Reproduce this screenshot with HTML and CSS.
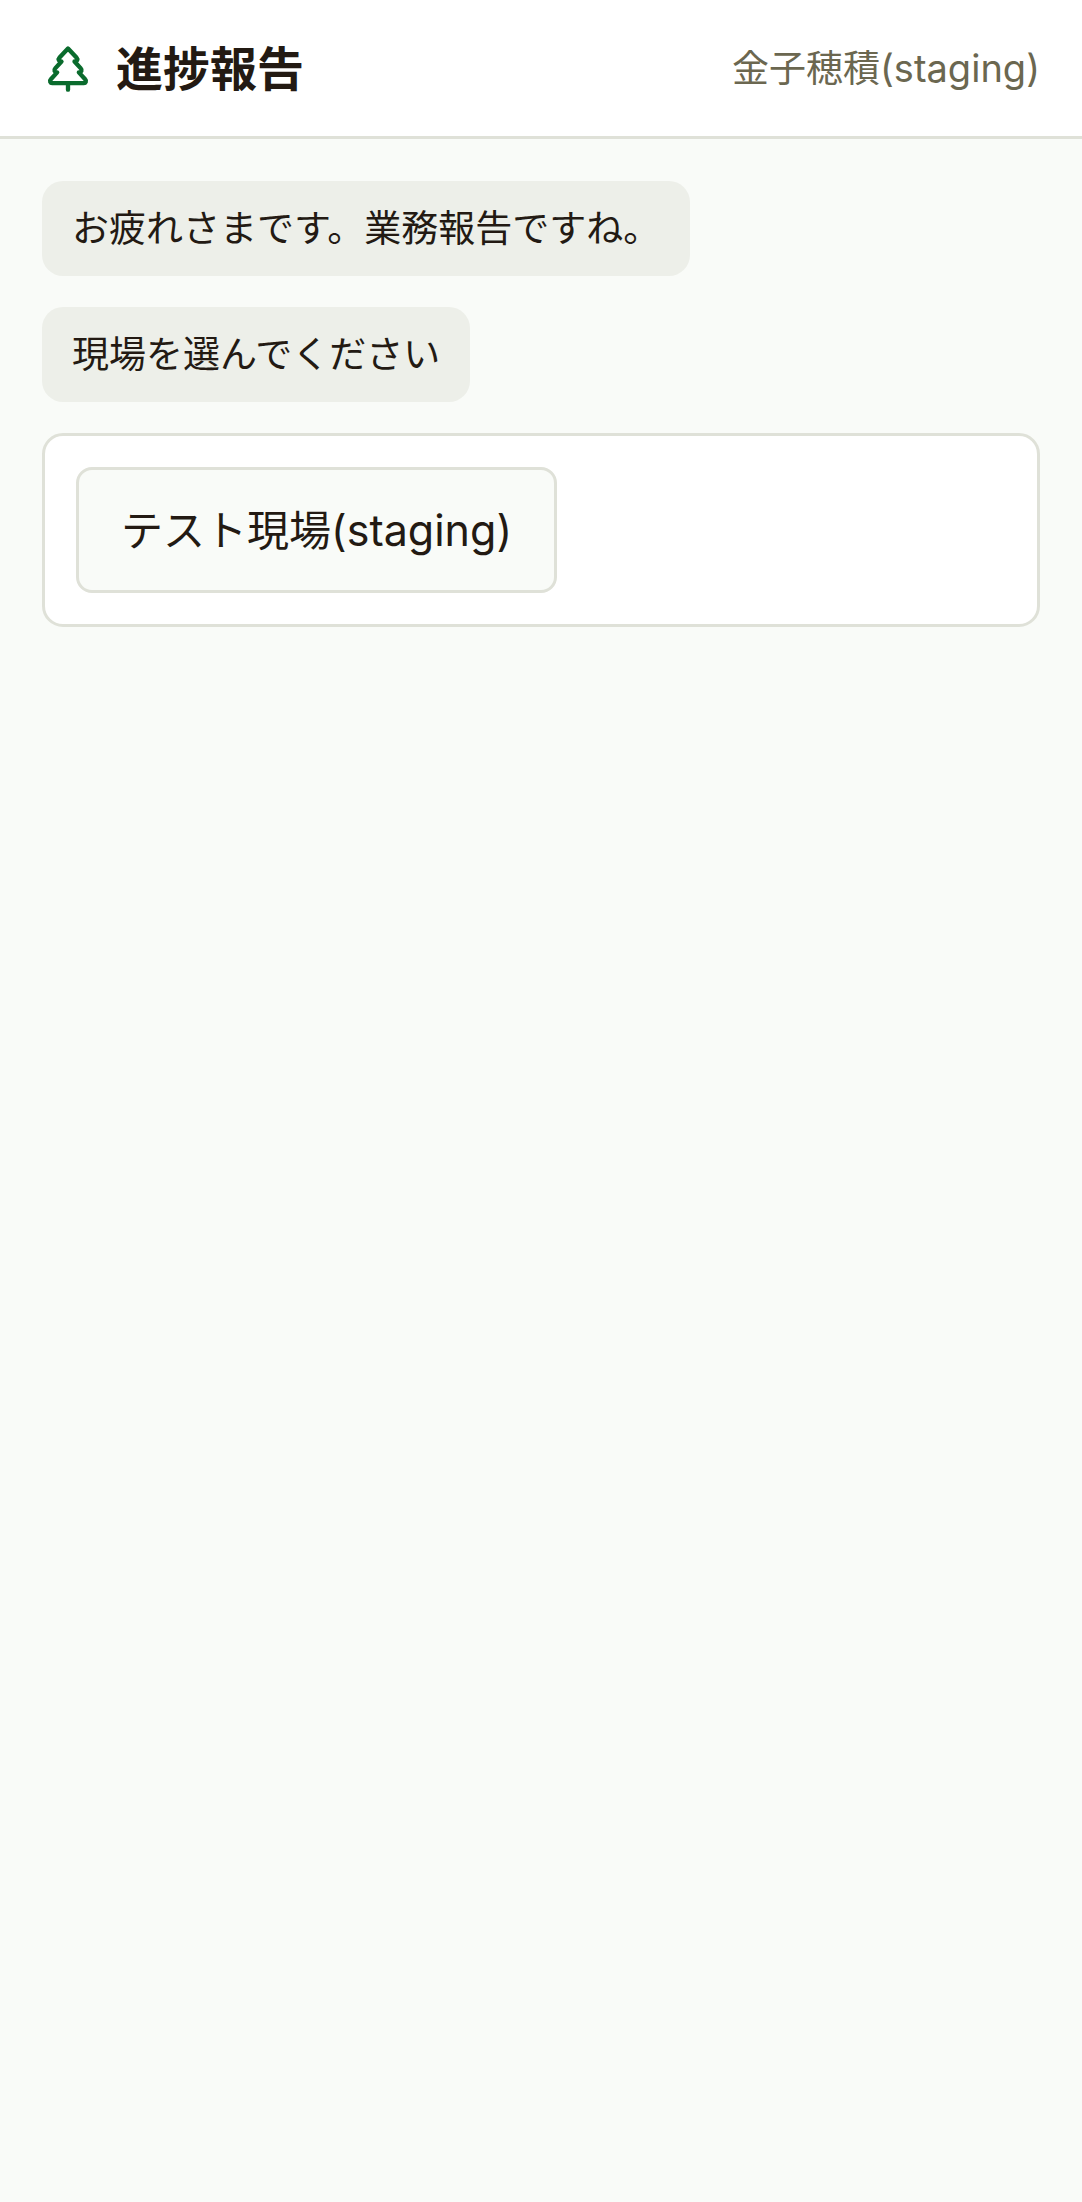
FILE: index.html
```html
<!DOCTYPE html>
<html lang="ja">
  <head>
    <meta charset="UTF-8" />
    <meta name="viewport" content="width=device-width, initial-scale=1.0" />
    <title>進捗報告</title>
    <link rel="stylesheet" href="styles.css">
  </head>

  <body>
    <header class="header">
      <svg class="logo" viewBox="0 0 24 24" aria-hidden="true">
        <path d="m17 14 3 3.3a1 1 0 0 1-.7 1.7H4.7a1 1 0 0 1-.7-1.7L7 14h-.3a1 1 0 0 1-.7-1.7L9 9h-.2A1 1 0 0 1 8 7.3L12 3l4 4.3a1 1 0 0 1-.8 1.7H15l3 3.3a1 1 0 0 1-.7 1.7H17Z" />
        <path d="M12 22v-3" />
      </svg>
      <h1 class="title">進捗報告</h1>
      <span class="user">金子穂積<span class="latin">(staging)</span></span>
    </header>

    <!-- チャット -->
    <main class="chat">
      <p class="message">お疲れさまです。業務報告ですね。</p>
      <p class="message">現場を選んでください</p>
      <!-- 現場の選択肢 -->
      <div class="choices">
        <button type="button" class="choice">テスト現場<span class="latin">(staging)</span></button>
      </div>
    </main>
  </body>
</html>
```

FILE: styles.css
```css
* {
  box-sizing: border-box;
  margin: 0;
  padding: 0;
}
body {
  min-height: 100vh;
  background-color: #f9fbf8;
  color: #231a13;
  font-family: "Noto Sans CJK JP", sans-serif;
  font-size: 37px;
}
/* ヘッダー */
.header {
  display: flex;
  align-items: center;
  padding: 36px 42px;
  background-color: #fff;
  border-bottom: 3px solid #dfe1d8;
}
.logo {
  width: 52px;
  height: 52px;
  margin-right: 22px;
  fill: none;
  stroke: #0a6b2d;
  stroke-width: 2;
  stroke-linecap: round;
  stroke-linejoin: round;
}
.title {
  padding-bottom: 4px;
  font-size: 47px;
  font-weight: 700;
  line-height: 60px;
}
.user {
  margin-left: auto;
  padding-bottom: 4px;
  color: #6b6750;
  line-height: 56px;
}
.latin {
  font-family: Inter, "Noto Sans CJK JP", sans-serif;
  line-height: 1;
}
.user .latin {
  font-size: 38px;
}
/* メッセージ */
.chat {
  display: flex;
  flex-direction: column;
  align-items: flex-start;
  gap: 31px;
  padding: 42px;
}
.message {
  padding: 16px 30px 20px;
  background-color: #edefe9;
  border-radius: 21px;
  line-height: 59px;
}
.choices {
  display: flex;
  flex-wrap: wrap;
  gap: 21px;
  width: 100%;
  padding: 31px;
  background-color: #fff;
  border: 3px solid #dfe1d8;
  border-radius: 21px;
}
.choice {
  padding: 26px 42px 30px;
  background-color: #f9fbf8;
  border: 3px solid #dfe1d8;
  border-radius: 16px;
  color: inherit;
  font-family: inherit;
  font-size: 42px;
  line-height: 64px;
  cursor: pointer;
}
.choice .latin {
  font-size: 43px;
}
```
